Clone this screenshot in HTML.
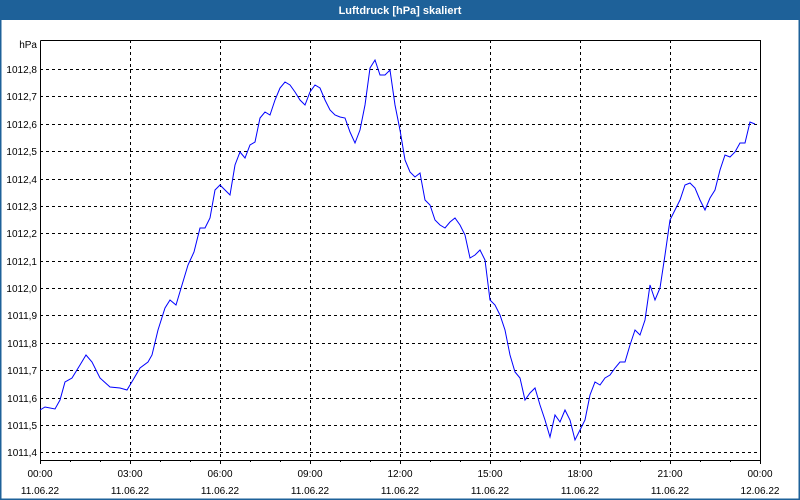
<!DOCTYPE html>
<html><head><style>
body{margin:0;width:800px;height:500px;overflow:hidden;background:#fff}
</style></head><body>
<svg width="800" height="500" xmlns="http://www.w3.org/2000/svg" style="display:block;font-family:'Liberation Sans',sans-serif">
<rect x="0" y="0" width="800" height="500" fill="#fff"/>
<rect x="0" y="0" width="800" height="20" fill="#1e6199"/>
<rect x="0.5" y="0.5" width="799" height="499" fill="none" stroke="#1e6199" stroke-width="2"/>
<text x="400" y="14" fill="#fff" font-size="11" font-weight="bold" text-anchor="middle">Luftdruck [hPa] skaliert</text>
<g stroke="#000" stroke-dasharray="3,3" stroke-width="1">
<line x1="130.5" y1="40" x2="130.5" y2="460"/><line x1="220.5" y1="40" x2="220.5" y2="460"/><line x1="310.5" y1="40" x2="310.5" y2="460"/><line x1="400.5" y1="40" x2="400.5" y2="460"/><line x1="490.5" y1="40" x2="490.5" y2="460"/><line x1="580.5" y1="40" x2="580.5" y2="460"/><line x1="670.5" y1="40" x2="670.5" y2="460"/>
<line x1="40" y1="69.5" x2="760" y2="69.5"/><line x1="40" y1="96.5" x2="760" y2="96.5"/><line x1="40" y1="124.5" x2="760" y2="124.5"/><line x1="40" y1="151.5" x2="760" y2="151.5"/><line x1="40" y1="179.5" x2="760" y2="179.5"/><line x1="40" y1="206.5" x2="760" y2="206.5"/><line x1="40" y1="233.5" x2="760" y2="233.5"/><line x1="40" y1="261.5" x2="760" y2="261.5"/><line x1="40" y1="288.5" x2="760" y2="288.5"/><line x1="40" y1="315.5" x2="760" y2="315.5"/><line x1="40" y1="343.5" x2="760" y2="343.5"/><line x1="40" y1="370.5" x2="760" y2="370.5"/><line x1="40" y1="398.5" x2="760" y2="398.5"/><line x1="40" y1="425.5" x2="760" y2="425.5"/><line x1="40" y1="452.5" x2="760" y2="452.5"/>
</g>
<path d="M40.5 40.5V460.5H760.5V40.5H40.5" fill="none" stroke="#000" stroke-width="1"/>
<g stroke="#000"><line x1="40.5" y1="460" x2="40.5" y2="464"/><line x1="70.5" y1="460" x2="70.5" y2="462"/><line x1="100.5" y1="460" x2="100.5" y2="462"/><line x1="130.5" y1="460" x2="130.5" y2="464"/><line x1="160.5" y1="460" x2="160.5" y2="462"/><line x1="190.5" y1="460" x2="190.5" y2="462"/><line x1="220.5" y1="460" x2="220.5" y2="464"/><line x1="250.5" y1="460" x2="250.5" y2="462"/><line x1="280.5" y1="460" x2="280.5" y2="462"/><line x1="310.5" y1="460" x2="310.5" y2="464"/><line x1="340.5" y1="460" x2="340.5" y2="462"/><line x1="370.5" y1="460" x2="370.5" y2="462"/><line x1="400.5" y1="460" x2="400.5" y2="464"/><line x1="430.5" y1="460" x2="430.5" y2="462"/><line x1="460.5" y1="460" x2="460.5" y2="462"/><line x1="490.5" y1="460" x2="490.5" y2="464"/><line x1="520.5" y1="460" x2="520.5" y2="462"/><line x1="550.5" y1="460" x2="550.5" y2="462"/><line x1="580.5" y1="460" x2="580.5" y2="464"/><line x1="610.5" y1="460" x2="610.5" y2="462"/><line x1="640.5" y1="460" x2="640.5" y2="462"/><line x1="670.5" y1="460" x2="670.5" y2="464"/><line x1="700.5" y1="460" x2="700.5" y2="462"/><line x1="730.5" y1="460" x2="730.5" y2="462"/><line x1="760.5" y1="460" x2="760.5" y2="464"/></g>
<g font-size="10" fill="#000" text-anchor="end">
<text x="37" y="48">hPa</text>
<text x="37" y="73">1012,8</text><text x="37" y="100">1012,7</text><text x="37" y="128">1012,6</text><text x="37" y="155">1012,5</text><text x="37" y="183">1012,4</text><text x="37" y="210">1012,3</text><text x="37" y="237">1012,2</text><text x="37" y="265">1012,1</text><text x="37" y="292">1012,0</text><text x="37" y="319">1011,9</text><text x="37" y="347">1011,8</text><text x="37" y="374">1011,7</text><text x="37" y="402">1011,6</text><text x="37" y="429">1011,5</text><text x="37" y="456">1011,4</text>
</g>
<g font-size="10" fill="#000" text-anchor="middle">
<text x="40" y="477">00:00</text><text x="40" y="494">11.06.22</text>
<text x="130" y="477">03:00</text><text x="130" y="494">11.06.22</text>
<text x="220" y="477">06:00</text><text x="220" y="494">11.06.22</text>
<text x="310" y="477">09:00</text><text x="310" y="494">11.06.22</text>
<text x="400" y="477">12:00</text><text x="400" y="494">11.06.22</text>
<text x="490" y="477">15:00</text><text x="490" y="494">11.06.22</text>
<text x="580" y="477">18:00</text><text x="580" y="494">11.06.22</text>
<text x="670" y="477">21:00</text><text x="670" y="494">11.06.22</text>
<text x="760" y="477">00:00</text><text x="760" y="494">12.06.22</text>
</g>
<polyline fill="none" stroke="#0000ff" stroke-width="1" points="40,410 45,407 55,409 60,400 65,382 72,378 80,365 86,355 92,362 100,378 110,387 120,388 127,390 133,380 140,368 148,362 152,355 158,330 165,308 170,300 176,305 182,285 188,265 194,252 200,228 205,228 210,218 215,190 220,185 225,190 230,195 235,165 240,152 245,158 250,145 255,142 260,118 265,112 270,115 275,100 280,88 285,82 290,85 295,92 300,100 305,105 310,92 315,85 320,88 325,100 330,110 335,115 340,117 345,118 350,132 355,143 360,130 365,105 370,68 375,60 380,75 385,75 390,70 395,105 400,130 405,160 410,172 415,177 420,173 425,200 430,205 435,220 440,225 445,228 450,222 455,218 460,225 465,235 470,258 475,255 480,250 485,260 490,300 495,305 500,315 505,330 510,355 515,372 520,378 525,400 530,393 535,388 540,405 545,420 550,437 555,415 560,422 565,410 570,420 575,440 580,430 585,420 590,395 595,382 600,385 605,378 610,375 615,368 620,362 625,362 630,345 635,330 640,335 645,320 650,285 655,300 660,288 665,255 670,220 675,210 680,200 685,185 690,183 695,188 700,200 705,210 710,198 715,190 720,170 725,155 730,157 735,152 740,143 745,143 750,122 755,124"/>
</svg>
</body></html>
